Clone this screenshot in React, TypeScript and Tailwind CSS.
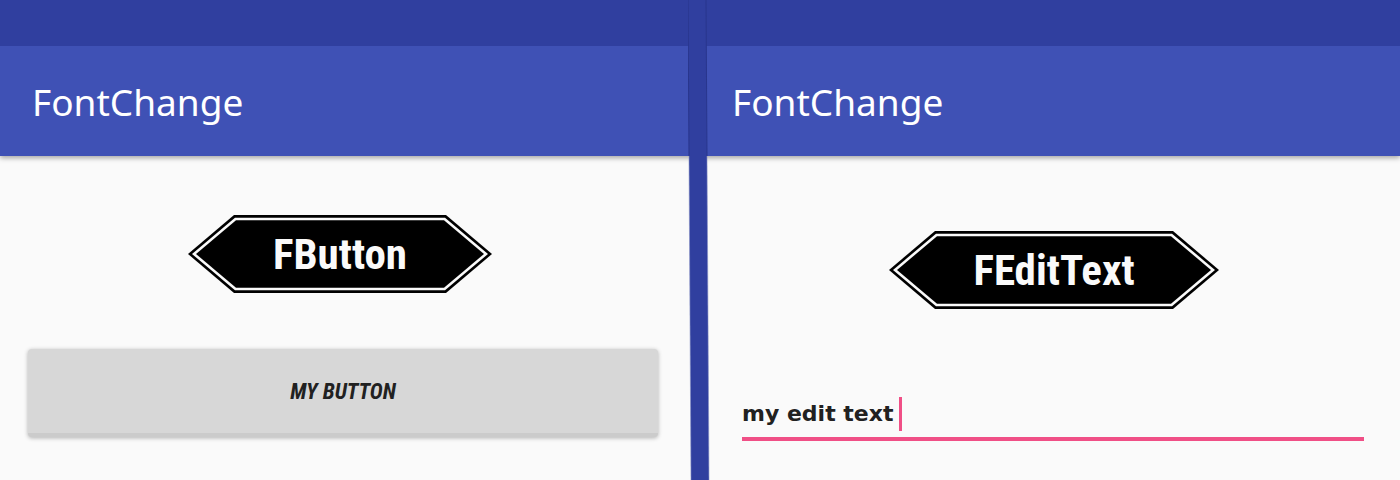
import React, { useState } from "react";

function Banner({ label, width }: { label: string; width: number }) {
  const w = width;
  return (
    <div className="grid place-items-center">
      <svg
        aria-hidden="true"
        className="col-start-1 row-start-1"
        width={w}
        height={78}
        viewBox={`0 0 ${w} 78`}
      >
        <polygon points={`0,39 46,0 ${w - 46},0 ${w},39 ${w - 46},78 46,78`} fill="#000" />
        <polygon
          points={`4,39 47,2.7 ${w - 47},2.7 ${w - 4},39 ${w - 47},75.3 47,75.3`}
          fill="#fafafa"
        />
        <polygon
          points={`8,39 48,5.2 ${w - 48},5.2 ${w - 8},39 ${w - 48},72.8 48,72.8`}
          fill="#000"
        />
      </svg>
      <h2 className="col-start-1 row-start-1 font-['Roboto_Condensed','Liberation_Sans',sans-serif] text-[43px] leading-[72px] font-bold text-[#fafafa]">
        {label}
      </h2>
    </div>
  );
}

function Screen({ children }: { children: React.ReactNode }) {
  return (
    <section className="min-w-0 bg-[#fafafa]">
      <div className="relative h-[46px] bg-[#303f9f]" />
      <header className="flex h-[110px] items-center bg-[#3f51b5] px-8 pt-0.5 shadow-[0_2px_5px_rgba(0,0,0,0.35)]">
        <h1 className="font-['Noto_Sans',sans-serif] text-[37px] leading-[56px] text-white">
          FontChange
        </h1>
      </header>
      {children}
    </section>
  );
}

export default function App() {
  const [text, setText] = useState("my edit text");
  return (
    <main className="relative grid min-h-screen grid-cols-2 overflow-hidden">
      <Screen>
        <div className="pt-[59px] pr-[20px]">
          <Banner label="FButton" width={304} />
        </div>
        <div className="pt-14 pr-[42px] pl-7">
          <button
            type="button"
            className="h-[88px] w-full rounded-[4px] border-b-4 border-[#cbcbcb] bg-[#d7d7d7] font-['Roboto_Condensed','Liberation_Sans',sans-serif] text-[22px] font-bold text-[#212121] italic shadow-[0_1px_4px_rgba(0,0,0,0.3)]"
          >
            MY BUTTON
          </button>
        </div>
      </Screen>
      <Screen>
        <div className="pt-[75px] pl-[8px]">
          <Banner label="FEditText" width={330} />
        </div>
        <div className="pt-[84px] pr-9 pl-[42px]">
          <div className="relative">
            <input
              type="text"
              aria-label="Edit text"
              value={text}
              onChange={(e) => setText(e.target.value)}
              className="block h-12 w-full border-b-4 border-[#f04f86] bg-transparent pb-1 font-['DejaVu_Sans',sans-serif] text-[22px] font-bold text-[#212121] caret-[#f04f86] outline-none"
            />
            <span className="absolute top-1 left-[157px] h-[34px] w-[3px] bg-[#f04f86]" />
          </div>
        </div>
      </Screen>
      <svg
        aria-hidden="true"
        className="absolute inset-y-0 left-1/2 -ml-3 h-full w-[22px]"
        viewBox="0 0 22 480"
        preserveAspectRatio="none"
      >
        <polygon points="0,0 18,0 21,480 3,480" fill="#303f9f" />
        <path d="M0 0L1 156M18 0L19 156" stroke="#29368d" strokeWidth="1" fill="none" />
        <path d="M1 156L3 480M19 156L21 480" stroke="#8790c5" strokeWidth="0.6" fill="none" />
      </svg>
    </main>
  );
}
